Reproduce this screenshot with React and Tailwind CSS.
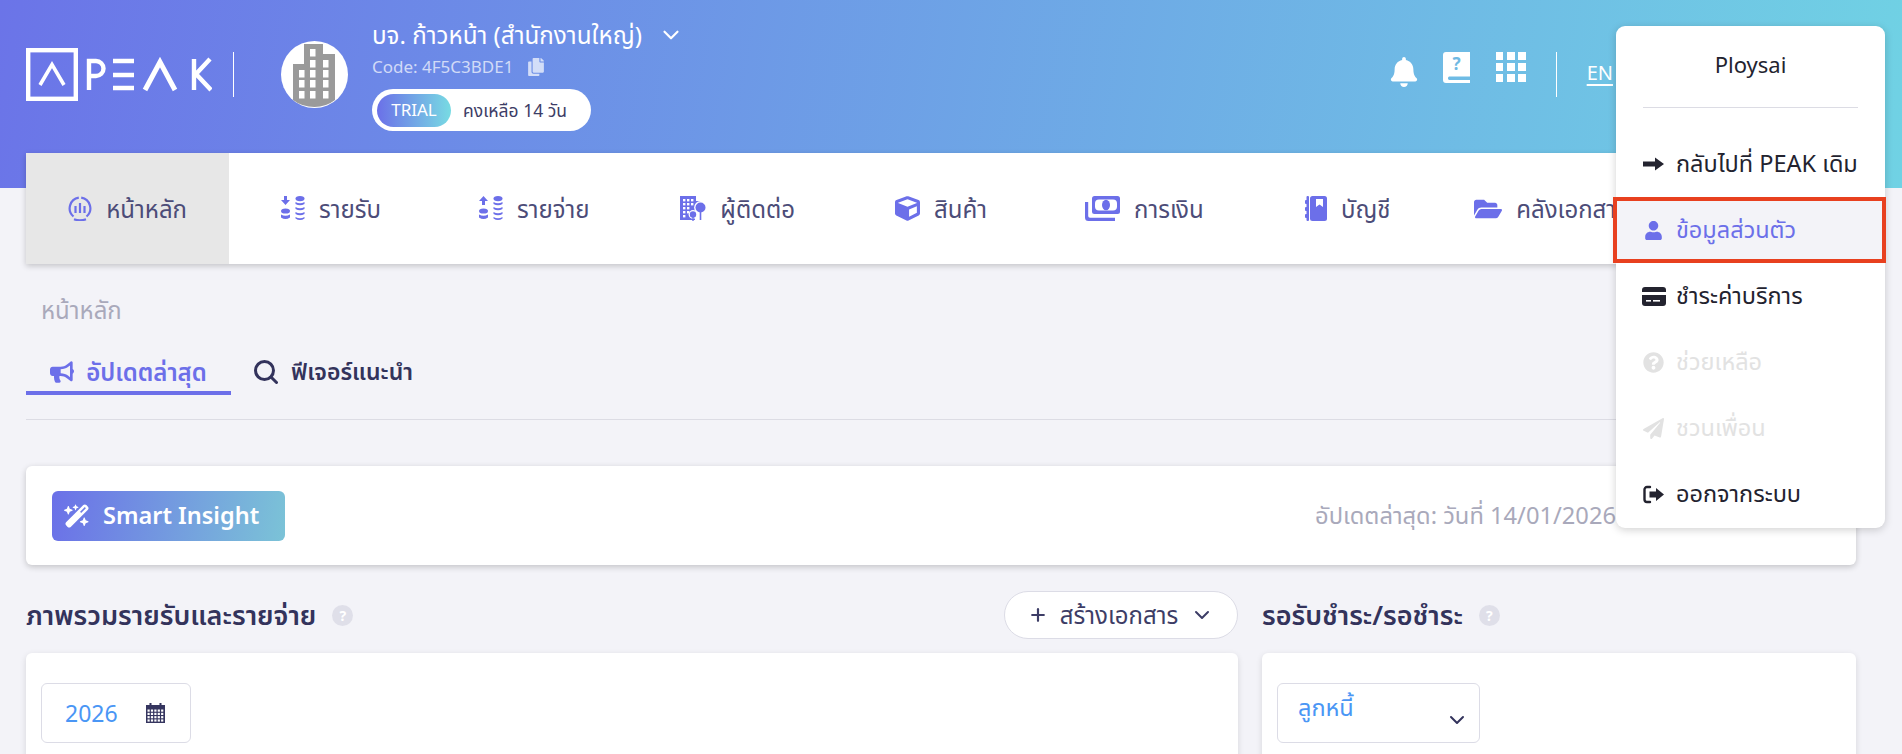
import React from "react";
import { FaBell, FaCube, FaFolderOpen, FaUser, FaQuestionCircle, FaPaperPlane, FaBullhorn, FaCopy } from "react-icons/fa";
import { FaWandMagicSparkles } from "react-icons/fa6";
import { LuChevronDown, LuPlus } from "react-icons/lu";

const FONT = "font-['Noto_Sans','Noto_Sans_Thai','Open_Sans',sans-serif]";

function Logo() {
  return (
    <svg role="img" aria-label="PEAK" width="186" height="53" viewBox="0 0 186 53" fill="none" stroke="#fff" strokeWidth="4.4" className="shrink-0">
      <rect x="2.2" y="2.2" width="47.6" height="48.6" strokeWidth="4.4" />
      <path d="M14 37 L26 16.5 L38 37" strokeWidth="3.6" />
      <path d="M63 42 V13 H70 a7 7 0 0 1 0 15 H63" />
      <path d="M87 13 H108 M87 27 H108 M87 40 H108" />
      <path d="M119 42 L134 14 L149 42" strokeWidth="5" />
      <path d="M168 11 V42 M184 11 L170 26 L185 42" />
    </svg>
  );
}

function Avatar() {
  return (
    <svg width="67" height="67" viewBox="0 0 67 67" className="shrink-0">
      <circle cx="33.5" cy="33.5" r="33.5" fill="#fff" />
      <path d="M23 3 H42 V13 H54 V59 Q45 66 33.5 66 Q21 66 12 59 V23 H23 Z" fill="#9a9a9a" />
      {[[29, 8], [29, 19], [29, 29], [29, 39], [29, 50], [18, 29], [18, 39], [18, 50], [42, 19], [42, 29], [42, 39], [42, 50]].map(([x, y]) => (
        <rect key={x + "-" + y} x={x} y={y} width="5.5" height="7.5" fill="#fff" />
      ))}
    </svg>
  );
}

function HomeIcon() {
  return (
    <svg width="24" height="25" viewBox="0 0 24 25" fill="none" stroke="#6c6fe9" className="shrink-0">
      <path d="M5.5 20.5 A10.8 10.8 0 0 1 10.8 1.6 M13.2 1.6 A10.8 10.8 0 0 1 18.5 20.5" strokeWidth="2.2" />
      <path d="M6 23.2 Q12 25.4 18 23.2" strokeWidth="2.2" />
      <path d="M7.5 10 V17 M12 7 V17 M16.5 10 V17" strokeWidth="2.2" />
    </svg>
  );
}

function StackIcon({ up }) {
  const c = "#6c6fe9";
  return (
    <svg width="24" height="25" viewBox="0 0 24 25" fill={c} className="shrink-0">
      <path d={up ? "M4.5 0 L9 5 H6 V9 H3 V5 H0 Z" : "M3 0 H6 V4 H9 L4.5 9 L0 4 H3 Z"} />
      <ellipse cx="4.5" cy="15" rx="4.5" ry="2.6" />
      <path d="M0 18.5 Q4.5 21 9 18.5 V21.5 Q4.5 24.5 0 21.5 Z" />
      <ellipse cx="19" cy="2.6" rx="4.5" ry="2.6" />
      <path d="M14.5 6 Q19 8.6 23.5 6 V8 Q19 10.6 14.5 8 Z M14.5 11 Q19 13.6 23.5 11 V13 Q19 15.6 14.5 13 Z M14.5 16 Q19 18.6 23.5 16 V18 Q19 20.6 14.5 18 Z M14.5 21 Q19 23.6 23.5 21 V22.5 Q19 25.5 14.5 22.5 Z" />
    </svg>
  );
}

function ContactIcon() {
  const c = "#6c6fe9";
  return (
    <svg width="26" height="25" viewBox="0 0 26 25" className="shrink-0">
      <path d="M0 0 H16 V5 H21 V24 H0 Z" fill={c} />
      {[[3, 3], [7, 3], [11, 3], [3, 7], [7, 7], [11, 7], [3, 11], [7, 11], [3, 15], [7, 15], [3, 19]].map(([x, y]) => (
        <rect key={x + "-" + y} x={x} y={y} width="2.4" height="2.4" fill="#fff" />
      ))}
      <circle cx="20.5" cy="11.5" r="6.4" fill="#fff" />
      <rect x="15" y="16" width="11" height="9" fill="#fff" />
      <circle cx="20.5" cy="11.5" r="5" fill={c} />
      <rect x="19.7" y="15" width="1.6" height="9" fill={c} />
      <circle cx="13" cy="18.5" r="4.4" fill="#fff" />
      <circle cx="13" cy="18.5" r="3.2" fill={c} />
      <rect x="12.3" y="20" width="1.4" height="5" fill={c} />
    </svg>
  );
}

function MoneyIcon() {
  return (
    <svg width="35" height="25" viewBox="0 0 35 25" className="shrink-0">
      <rect x="7" y="0" width="28" height="18" rx="2.5" fill="#6c6fe9" />
      <rect x="10" y="3.5" width="22" height="11" rx="4" fill="#fff" />
      <ellipse cx="21" cy="9" rx="4" ry="5.2" fill="#6c6fe9" />
      <path d="M0 6 H3.2 V20 A1.8 1.8 0 0 0 5 21.8 H30 V25 H3.5 A3.5 3.5 0 0 1 0 21.5 Z" fill="#6c6fe9" />
    </svg>
  );
}

function LedgerIcon() {
  return (
    <svg width="22" height="25" viewBox="0 0 22 25" className="shrink-0">
      <rect x="5" y="0" width="17" height="25" rx="2.5" fill="#6c6fe9" />
      <path d="M11 3 H18 V11 L14.5 8.5 L11 11 Z" fill="#fff" />
      <rect x="1.5" y="0" width="2.5" height="25" rx="1" fill="#6c6fe9" />
      <rect x="0" y="4" width="3" height="4" rx="1" fill="#6c6fe9" />
      <rect x="0" y="11" width="3" height="4" rx="1" fill="#6c6fe9" />
      <rect x="0" y="18" width="3" height="4" rx="1" fill="#6c6fe9" />
    </svg>
  );
}

function QuestionBook() {
  return (
    <svg width="27" height="31" viewBox="0 0 27 31" className="shrink-0">
      <path d="M3 0 H27 V24.5 H6 A2 2 0 0 0 6 28 H27 V31 H3 A3 3 0 0 1 0 28 V3 A3 3 0 0 1 3 0 Z" fill="#fff" />
      <text x="13.5" y="18" textAnchor="middle" fontSize="17" fontWeight="700" fontFamily="Noto Sans" fill="#6fb9e3">?</text>
    </svg>
  );
}

function GridIcon() {
  return (
    <div className="grid grid-cols-3 gap-[3.5px] w-[30px] h-[30px] shrink-0">
      {Array.from({ length: 9 }).map((_, i) => (
        <div key={i} className="bg-white" />
      ))}
    </div>
  );
}

function ArrowRight() {
  return (
    <svg width="21" height="14" viewBox="0 0 21 14" className="shrink-0">
      <path d="M0 4.5 H12 V0.5 L21 7 L12 13.5 V9.5 H0 Z" fill="#23232f" />
    </svg>
  );
}

function CardIcon() {
  return (
    <svg width="24" height="19" viewBox="0 0 24 19" className="shrink-0">
      <path d="M3 0 H21 A3 3 0 0 1 24 3 V5 H0 V3 A3 3 0 0 1 3 0 Z" fill="#23232f" />
      <path d="M0 8 H24 V16 A3 3 0 0 1 21 19 H3 A3 3 0 0 1 0 16 Z" fill="#23232f" />
      <rect x="4" y="13" width="5" height="1.6" fill="#fff" />
      <rect x="11" y="13" width="7" height="1.6" fill="#fff" />
    </svg>
  );
}

function LogoutIcon() {
  return (
    <svg width="21" height="19" viewBox="0 0 21 19" className="shrink-0">
      <path d="M7 2 H4 A2.5 2.5 0 0 0 1.5 4.5 V14.5 A2.5 2.5 0 0 0 4 17 H7" fill="none" stroke="#23232f" strokeWidth="2.4" strokeLinecap="round" />
      <path d="M13 3 L21 9.5 L13 16 V12.5 H6.5 V6.5 H13 Z" fill="#23232f" />
    </svg>
  );
}

function SearchIcon() {
  return (
    <svg width="24" height="24" viewBox="0 0 24 24" fill="none" stroke="#33335c" strokeWidth="3" strokeLinecap="round" className="shrink-0">
      <circle cx="10.5" cy="10.5" r="9" />
      <path d="M17 17 L22.5 22.5" />
    </svg>
  );
}

function CalendarIcon() {
  return (
    <svg width="19" height="20" viewBox="0 0 19 20" className="shrink-0">
      <path d="M0 2 H19 V20 H0 Z" fill="#35355f" />
      <rect x="3.5" y="0" width="2" height="3" fill="#35355f" />
      <rect x="13.5" y="0" width="2" height="3" fill="#35355f" />
      {[0, 1, 2, 3, 4].map((c) => [0, 1, 2, 3].map((r) => (
        <rect key={c + "-" + r} x={1.5 + c * 3.4} y={6.5 + r * 3.3} width="2.2" height="2.2" fill="#fff" />
      )))}
    </svg>
  );
}

function Help() {
  return (
    <span className="w-[21px] h-[21px] rounded-full bg-[#dfdfe9] text-white text-[14px] font-bold flex items-center justify-center shrink-0">?</span>
  );
}

const NAV = [
  { label: "หน้าหลัก", icon: <HomeIcon />, active: true },
  { label: "รายรับ", icon: <StackIcon /> },
  { label: "รายจ่าย", icon: <StackIcon up /> },
  { label: "ผู้ติดต่อ", icon: <ContactIcon /> },
  { label: "สินค้า", icon: <FaCube size={25} color="#6c6fe9" className="shrink-0" /> },
  { label: "การเงิน", icon: <MoneyIcon /> },
  { label: "บัญชี", icon: <LedgerIcon /> },
  { label: "คลังเอกสาร", icon: <FaFolderOpen size={28} color="#6c6fe9" className="shrink-0" /> },
];

const MENU = [
  { label: "กลับไปที่ PEAK เดิม", icon: <ArrowRight />, cls: "text-[#23232f]" },
  { label: "ข้อมูลส่วนตัว", icon: <FaUser size={19} />, cls: "text-[#6c6fe9]", selected: true },
  { label: "ชำระค่าบริการ", icon: <CardIcon />, cls: "text-[#23232f]" },
  { label: "ช่วยเหลือ", icon: <FaQuestionCircle size={21} />, cls: "text-[#e2e2e2]" },
  { label: "ชวนเพื่อน", icon: <FaPaperPlane size={21} />, cls: "text-[#e2e2e2]" },
  { label: "ออกจากระบบ", icon: <LogoutIcon />, cls: "text-[#23232f]" },
];

export default function App() {
  return (
    <div className={`relative h-[754px] w-full overflow-hidden bg-[#f3f3f8] ${FONT}`}>
      <header className="h-[188px] px-[26px] pt-[28px] flex items-start bg-[linear-gradient(100deg,#6b74e8,#70d2e4)]">
        <div className="mt-[20px]"><Logo /></div>
        <div className="w-px h-[45px] bg-white mt-[24px] ml-[21px] mr-[47px] shrink-0" />
        <div className="mt-[13px] mr-[24px]"><Avatar /></div>
        <div className="flex flex-col items-start -mt-[10px]">
          <div className="flex items-center h-[34px] text-[24.2px] leading-[34px] text-white whitespace-nowrap">
            บจ. ก้าวหน้า (สำนักงานใหญ่)
            <LuChevronDown size={26} className="ml-[16px]" />
          </div>
          <div className="flex items-center mt-[3px] h-[24px] text-[17px] text-white/70 whitespace-nowrap">
            Code: 4F5C3BDE1
            <FaCopy size={18} className="ml-[14px]" />
          </div>
          <div className="mt-[10px] h-[42px] w-[219px] rounded-full bg-white flex items-center pl-[5px]">
            <span className="w-[74px] h-[33px] rounded-full bg-[linear-gradient(90deg,#6b70e8,#78dbe3)] text-white text-[17px] flex items-center justify-center">TRIAL</span>
            <span className="ml-[12px] text-[17.5px] text-[#3d3d66] whitespace-nowrap">คงเหลือ 14 วัน</span>
          </div>
        </div>
        <div className="ml-auto mr-[263px] flex items-start text-white pt-[24px]">
          <FaBell size={30} className="mr-[24px] mt-[5px]" />
          <QuestionBook />
          <div className="ml-[26px]"><GridIcon /></div>
          <div className="w-px h-[45px] bg-white ml-[30px] mr-[30px]" />
          <span className="text-[20px] underline underline-offset-4 mt-[6px]">EN</span>
        </div>
      </header>

      <main className="pl-[26px] pr-[46px] -mt-[35px]">
        <nav className="h-[111px] bg-white grid grid-cols-9 shadow-[0_2px_6px_rgba(0,0,0,0.2)]">
          {NAV.map((n) => (
            <div key={n.label} className={`flex items-center justify-center gap-[14px] whitespace-nowrap text-[24px] text-[#4c4c78] ${n.active ? "bg-[#e7e7e7]" : ""}`}>
              {n.icon}
              <span>{n.label}</span>
            </div>
          ))}
        </nav>

        <div className="pl-[15px] mt-[32px] text-[24px] leading-[28px] text-[#a9a9bb]">หน้าหลัก</div>

        <div className="flex mt-[26px] h-[70px] border-b border-[#dcdce4] items-start">
          <div className="w-[205px] h-[45px] pt-[2px] flex items-center justify-center gap-[12px] border-b-4 border-[#6c6fe9] text-[#6c6fe9] text-[24px] font-semibold">
            <FaBullhorn size={24} />อัปเดตล่าสุด
          </div>
          <div className="ml-[23px] h-[41px] pt-[2px] flex items-center gap-[13px] text-[#33335c] text-[23px] font-semibold">
            <SearchIcon />ฟีเจอร์แนะนำ
          </div>
        </div>

        <div className="mt-[46px] h-[99px] bg-white rounded-[6px] shadow-[0_2px_6px_rgba(0,0,0,0.2)] flex items-center justify-between pl-[26px] pr-[240px]">
          <div className="w-[233px] h-[50px] rounded-[6px] bg-[linear-gradient(100deg,#6b70e8,#7bc3d7)] text-white text-[23.5px] font-semibold flex items-center pl-[12px] gap-[13px] whitespace-nowrap">
            <FaWandMagicSparkles size={26} />Smart Insight
          </div>
          <span className="text-[23.7px] text-[#a9a9bb] whitespace-nowrap">อัปเดตล่าสุด: วันที่ 14/01/2026</span>
        </div>

        <div className="flex gap-[24px] mt-[26px]">
          <div className="w-[1212px] shrink-0">
            <div className="h-[48px] flex items-center">
              <h2 className="text-[27px] font-semibold text-[#33335c]">ภาพรวมรายรับและรายจ่าย</h2>
              <span className="ml-[16px]"><Help /></span>
              <button className="ml-auto w-[234px] h-[48px] rounded-full bg-white border border-[#dcdce6] flex items-center justify-center gap-[12px] text-[24px] text-[#3d3d66] whitespace-nowrap">
                <LuPlus size={20} strokeWidth={2.6} />สร้างเอกสาร<LuChevronDown size={24} />
              </button>
            </div>
            <div className="mt-[14px] h-[200px] bg-white rounded-[6px] shadow-[0_2px_6px_rgba(0,0,0,0.12)] pt-[30px] pl-[15px]">
              <div className="w-[150px] h-[60px] border border-[#dcdce6] rounded-[6px] flex items-center pl-[23px] gap-[28px] text-[23px] text-[#4a96f5]">
                2026<CalendarIcon />
              </div>
            </div>
          </div>
          <div className="flex-1">
            <div className="h-[48px] flex items-center">
              <h2 className="text-[27px] font-semibold text-[#33335c] whitespace-nowrap">รอรับชำระ/รอชำระ</h2>
              <span className="ml-[16px]"><Help /></span>
            </div>
            <div className="mt-[14px] h-[200px] bg-white rounded-[6px] shadow-[0_2px_6px_rgba(0,0,0,0.12)] pt-[30px] pl-[15px]">
              <div className="relative w-[203px] h-[60px] border border-[#dcdce6] rounded-[6px] pl-[20px] pt-[6px] text-[23.5px] text-[#4a96f5]">
                ลูกหนี้
                <LuChevronDown size={24} className="absolute right-[10px] top-[24px] text-[#33335c]" />
              </div>
            </div>
          </div>
        </div>
      </main>

      <div className="absolute left-[1616px] top-[26px] w-[269px] h-[502px] bg-white rounded-[9px] shadow-[0_2px_8px_rgba(0,0,0,0.18)]">
        <div className="h-[82px] mx-[27px] border-b border-[#dcdce4] flex items-center justify-center text-[22px] text-[#23232f] pb-[4px]">Ploysai</div>
        <div className="mt-[23px]">
          {MENU.map((m) => (
            <div key={m.label} className={`relative h-[66px] flex items-center pl-[27px] text-[23.5px] whitespace-nowrap ${m.cls} ${m.selected ? "bg-[#f3f3f8]" : ""}`}>
              <span className="w-[21px] flex items-center justify-center shrink-0">{m.icon}</span>
              <span className="ml-[12px]">{m.label}</span>
              {m.selected && <span className="absolute -left-[3px] -right-[1px] top-0 bottom-0 border-4 border-[#e8401f]" />}
            </div>
          ))}
        </div>
      </div>
    </div>
  );
}
